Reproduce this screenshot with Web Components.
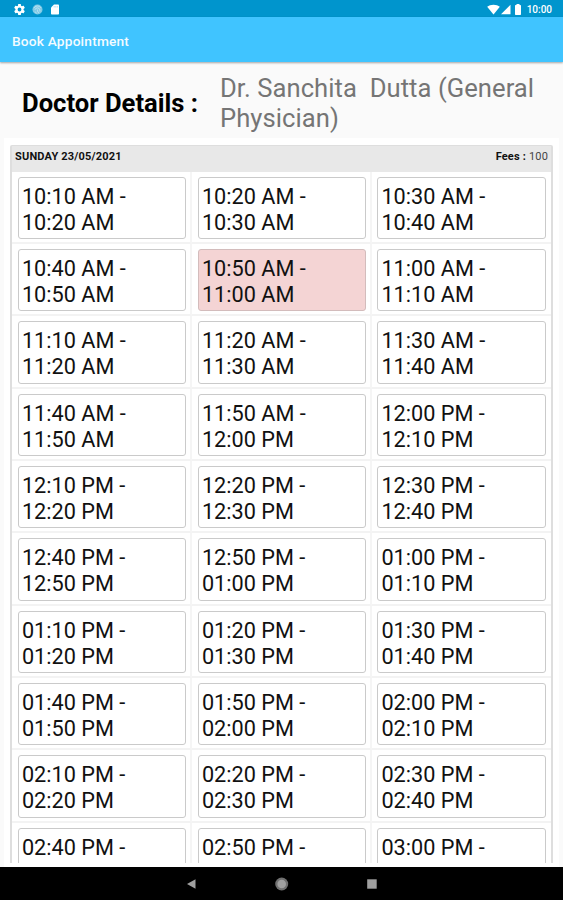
<!DOCTYPE html>
<html lang="en">
<head>
<meta charset="utf-8">
<title>Book Appointment</title>
<style>
  body {
    margin: 0;
    height: 100vh;
    overflow: hidden;
    font-family: Roboto, "Liberation Sans", sans-serif;
  }
</style>
</head>
<body>
<appointment-screen>
  <status-bar slot="status" time="10:00"></status-bar>
  <app-bar slot="bar">Book Appointment</app-bar>
  <doctor-details slot="details" label="Doctor Details :">Dr. Sanchita&nbsp; Dutta (General Physician)</doctor-details>
  <slot-table slot="table" day="SUNDAY 23/05/2021" fees="100" start="610" count="30" booked="4"></slot-table>
  <nav-bar slot="nav"></nav-bar>
</appointment-screen>

<script>
/* ------------- HELPERS ------------ */
const render = (element, markup) => {
  const template = document.createElement("template");
  template.innerHTML = markup;
  element.attachShadow({ mode: "open" }).append(template.content.cloneNode(true));
}

const formatTime = minutes => {
  const hours = Math.floor(minutes / 60);
  const hour = String(hours % 12 || 12).padStart(2, "0");
  const minute = String(minutes % 60).padStart(2, "0");
  return `${hour}:${minute} ${hours < 12 ? "AM" : "PM"}`;
}

/* ------------- SCREEN ------------- */
class AppointmentScreen extends HTMLElement {
  constructor() {
    super();
    render(this, /*html*/`
      <style>
        :host {
          display: flex;
          flex-direction: column;
          height: 100vh;
          background: #fafafa;
        }
        main {
          flex: 1;
          min-height: 0;
          display: flex;
          flex-direction: column;
        }
        .panel {
          flex: 1;
          min-height: 0;
          margin: 0 4px;
          padding: 7px 6px 0;
          background: #fff;
          border-bottom: 4px solid #fff;
          overflow: hidden;
        }
        .scroll {
          height: 100%;
          overflow: hidden;
        }
      </style>
      <slot name="status"></slot>
      <slot name="bar"></slot>
      <main>
        <slot name="details"></slot>
        <div class="panel"><div class="scroll"><slot name="table"></slot></div></div>
      </main>
      <slot name="nav"></slot>
    `);
  }
}

/* ----------- STATUS BAR ----------- */
class StatusBar extends HTMLElement {
  constructor() {
    super();
    render(this, /*html*/`
      <style>
        :host {
          display: flex;
          flex: none;
          justify-content: space-between;
          box-sizing: border-box;
          height: 17px;
          padding: 1px 11px 0 13px;
          background: #0095cd;
          color: #fff;
        }
        div {
          display: flex;
          align-items: center;
        }
        svg {
          display: block;
          fill: currentColor;
        }
        .left {
          gap: 6px;
        }
        .right svg {
          position: relative;
          left: -1px;
        }
        .time {
          margin-left: 3px;
          padding-top: 1px;
          font-size: 10px;
          font-weight: 500;
          line-height: 15px;
        }
      </style>
      <div class="left">
        <svg width="13" height="13" viewBox="0 0 24 24"><path d="M19.43 12.98c.04-.32.07-.64.07-.98s-.03-.66-.07-.98l2.11-1.65c.19-.15.24-.42.12-.64l-2-3.46c-.12-.22-.39-.3-.61-.22l-2.49 1c-.52-.4-1.08-.73-1.69-.98l-.38-2.65A.49.49 0 0 0 14 2h-4c-.25 0-.46.18-.49.42l-.38 2.65c-.61.25-1.17.59-1.69.98l-2.49-1c-.23-.09-.49 0-.61.22l-2 3.46c-.13.22-.07.49.12.64l2.11 1.65c-.04.32-.07.65-.07.98s.03.66.07.98l-2.11 1.65c-.19.15-.24.42-.12.64l2 3.46c.12.22.39.3.61.22l2.49-1c.52.4 1.08.73 1.69.98l.38 2.65c.03.24.24.42.49.42h4c.25 0 .46-.18.49-.42l.38-2.65c.61-.25 1.17-.59 1.69-.98l2.49 1c.23.09.49 0 .61-.22l2-3.46c.12-.22.07-.49-.12-.64l-2.11-1.65zM12 15.5a3.5 3.5 0 1 1 0-7 3.5 3.5 0 0 1 0 7z"/></svg>
        <svg width="11" height="11" viewBox="0 0 11 11"><circle cx="5.5" cy="5.5" r="5" opacity=".5"/><path d="M2 4.2a3.8 3.8 0 0 1 6.8-.3M3 5.8a2.5 2.5 0 0 1 4.9.2v1.5M5.4 5.5c0 2 .6 3 1.7 3.6M3.2 7.6l1.2 1.8" fill="none" stroke="#fff" stroke-width=".7" opacity=".6"/></svg>
        <svg width="12" height="11" viewBox="0 0 10 11"><path d="M4 .5h4.2q.8 0 .8.8v8.4q0 .8-.8.8H1.8q-.8 0-.8-.8V3.5z"/><path d="M4.2 2v1.5M5.8 2v1.5M7.4 2v1.5" stroke="#8fd0ea" stroke-width=".6"/></svg>
      </div>
      <div class="right">
        <svg width="13" height="11" viewBox="0 0 13 11"><path d="M6.5 10.5L.2 2.8C1.8 1.5 4 .8 6.5.8s4.7.7 6.3 2z"/></svg>
        <svg width="12" height="11" viewBox="0 0 12 11"><path d="M1 10.3L10.5.8v9.5z"/></svg>
        <svg width="11" height="11" viewBox="0 0 11 11"><path d="M4.5 0h3v1h.8q.7 0 .7.7v8.6q0 .7-.7.7H3.7q-.7 0-.7-.7V1.700q0-.7.7-.7h.8z"/></svg>
        <span class="time">${this.getAttribute("time")}</span>
      </div>
    `);
  }
}

/* ------------ APP BAR ------------- */
class AppBar extends HTMLElement {
  constructor() {
    super();
    render(this, /*html*/`
      <style>
        :host {
          display: flex;
          flex: none;
          align-items: center;
          position: relative;
          height: 45px;
          padding: 2px 12px 0;
          box-sizing: border-box;
          background: #40c4ff;
          box-shadow: 0 1px 2px rgba(0, 0, 0, .35);
          color: #f4fbff;
          font-size: 13.7px;
          font-weight: 500;
          letter-spacing: .2px;
        }
      </style>
      <slot></slot>
    `);
  }
}

/* --------- DOCTOR DETAILS --------- */
class DoctorDetails extends HTMLElement {
  constructor() {
    super();
    render(this, /*html*/`
      <style>
        :host {
          display: flex;
          flex: none;
          align-items: center;
          box-sizing: border-box;
          height: 76px;
          padding: 5px 10px 0 22px;
        }
        b {
          flex: 0 0 198px;
          color: #000;
          font-size: 25.6px;
          font-weight: 700;
        }
        p {
          margin: 0;
          color: #757575;
          font-size: 25.6px;
          line-height: 30px;
          letter-spacing: .05px;
        }
      </style>
      <b>${this.getAttribute("label")}</b>
      <p><slot></slot></p>
    `);
  }
}

/* ----------- TIME SLOT ------------ */
class TimeSlot extends HTMLElement {
  constructor() {
    super();
    render(this, /*html*/`
      <style>
        :host {
          display: block;
          box-sizing: border-box;
          height: 72.35px;
          padding: 5px 4px 4px 5.5px;
          border-right: 2px solid #f5f5f5;
          border-bottom: 2px solid #f3f3f3;
          color: #111;
        }
        div {
          box-sizing: border-box;
          height: 62.5px;
          padding: 6.2px 3.4px 0;
          border: 1px solid #cacaca;
          border-radius: 3px;
          font-size: 21.7px;
          line-height: 26px;
        }
        :host([booked]) div {
          background: #f4d4d4;
          border-color: #d3bcbc;
        }
      </style>
      <div><slot></slot></div>
    `);
  }
}

/* ----------- SLOT TABLE ----------- */
class SlotTable extends HTMLElement {
  constructor() {
    super();
    render(this, /*html*/`
      <style>
        :host {
          display: block;
          border: solid #dedede;
          border-width: 1px 2px 0;
          border-radius: 2px 2px 0 0;
        }
        header {
          display: flex;
          justify-content: space-between;
          box-sizing: border-box;
          height: 25.5px;
          padding: 0 3px;
          background: #e8e8e8;
          color: #111;
          font-size: 11px;
          line-height: 21px;
          letter-spacing: .18px;
        }
        .fees {
          color: #444;
        }
        .fees b {
          color: #111;
        }
        .grid {
          display: grid;
          grid-template-columns: 180px 180px 1fr;
        }
        time-slot:nth-child(3n) {
          padding-left: 5px;
          padding-right: 5.5px;
          border-right: 0;
        }
      </style>
      <header>
        <b>${this.getAttribute("day")}</b>
        <span class="fees"><b>Fees :</b> ${this.getAttribute("fees")}</span>
      </header>
      <div class="grid"></div>
    `);
  }

  connectedCallback() {
    const grid = this.shadowRoot.querySelector(".grid");
    const start = Number(this.getAttribute("start"));
    const count = Number(this.getAttribute("count"));
    const booked = Number(this.getAttribute("booked"));

    grid.innerHTML = "";
    for (let i = 0; i < count; i++) {
      const from = start + i * 10;
      grid.insertAdjacentHTML("beforeend",
        `<time-slot ${i == booked ? "booked" : ""}>${formatTime(from)} -<br>${formatTime(from + 10)}</time-slot>`);
    }
  }
}

/* ------------ NAV BAR ------------- */
class NavBar extends HTMLElement {
  constructor() {
    super();
    render(this, /*html*/`
      <style>
        :host {
          display: flex;
          flex: none;
          justify-content: center;
          align-items: center;
          gap: 76px;
          height: 33px;
          background: #000;
        }
        svg {
          display: block;
          fill: #a0a0a0;
        }
      </style>
      <svg width="14" height="14" viewBox="0 0 14 14"><path d="M2 7l8.500-4.700v9.400z"/></svg>
      <svg width="14" height="14" viewBox="0 0 14 14"><circle cx="6.7" cy="7" r="6.5" fill="#707070"/><circle cx="6.7" cy="7" r="4.3"/></svg>
      <svg width="14" height="14" viewBox="0 0 14 14"><path d="M2.2 2.3h9.500v9.400h-9.500z"/></svg>
    `);
  }
}

customElements.define("appointment-screen", AppointmentScreen);
customElements.define("status-bar", StatusBar);
customElements.define("app-bar", AppBar);
customElements.define("doctor-details", DoctorDetails);
customElements.define("time-slot", TimeSlot);
customElements.define("slot-table", SlotTable);
customElements.define("nav-bar", NavBar);
</script>
</body>
</html>
